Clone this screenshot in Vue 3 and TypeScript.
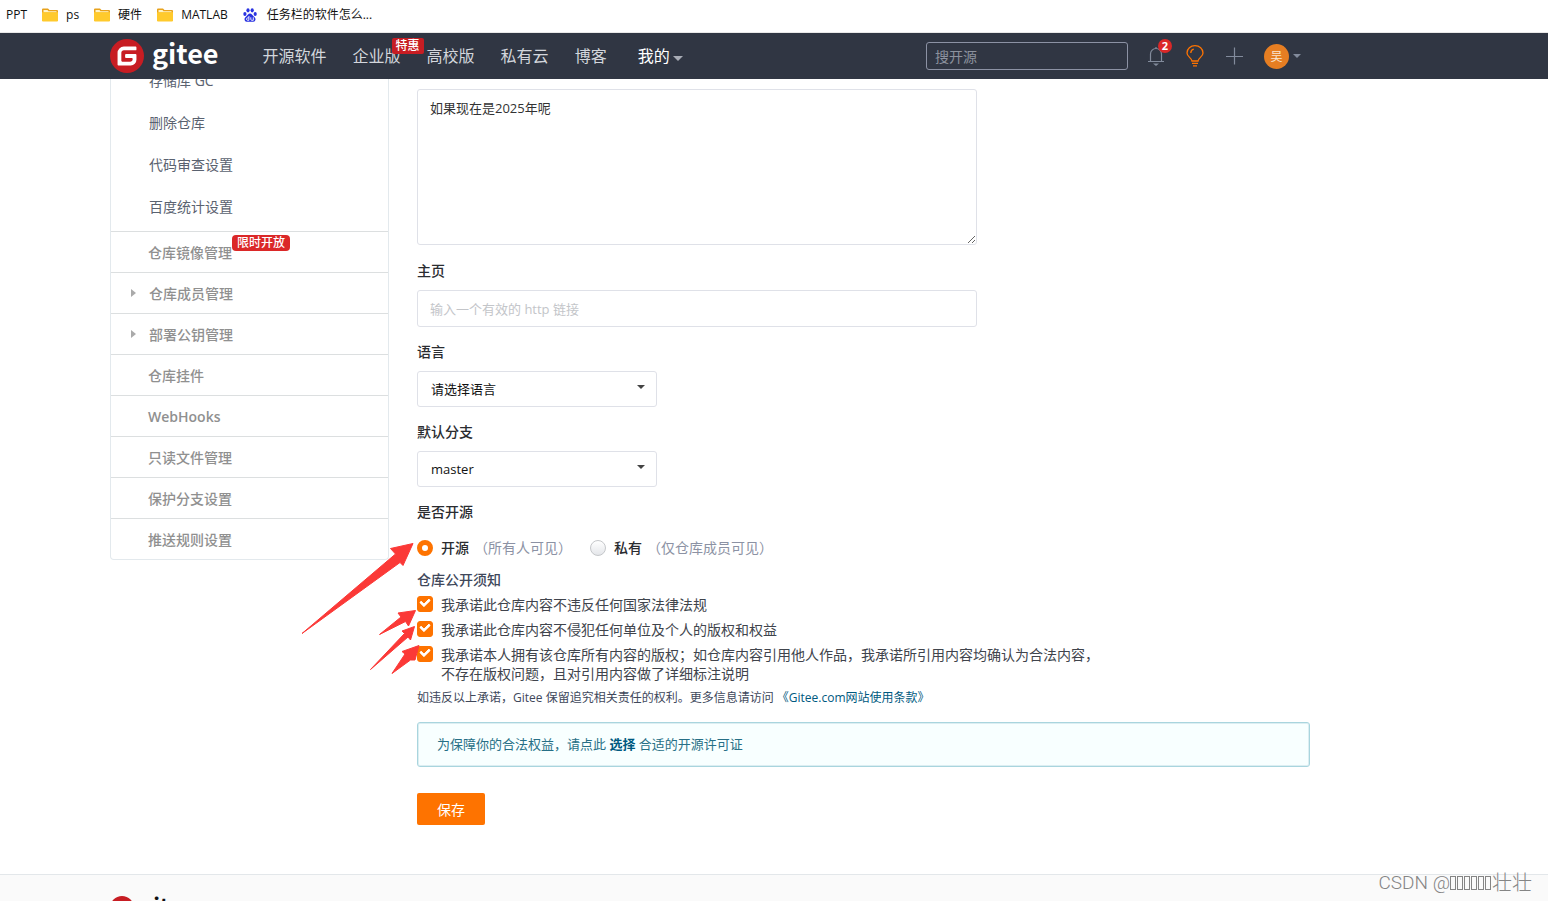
<script setup lang="ts">
import { ref } from 'vue'

interface SideEntry {
  label: string
  expandable?: boolean
  strong?: boolean
  tag?: string
}

const gPath =
  'M18.074 5.333c.328 0 .593.266.592.593v1.482a.594.594 0 0 1-.593.592H9.777c-.982 0-1.778.796-1.778 1.778v5.63c0 .327.266.592.593.592h5.63c.982 0 1.778-.796 1.778-1.778v-.296a.593.593 0 0 0-.592-.593h-4.15a.592.592 0 0 1-.592-.592v-1.482a.593.593 0 0 1 .593-.592h6.815c.327 0 .593.265.593.592v3.408a4 4 0 0 1-4 4H5.926a.593.593 0 0 1-.593-.593V9.778a4.444 4.444 0 0 1 4.445-4.444h8.296Z'

const folders = ['ps', '硬件', 'MATLAB']
const navLinks = [
  { label: '开源软件' },
  { label: '企业版', tag: '特惠' },
  { label: '高校版' },
  { label: '私有云' },
  { label: '博客' },
]
const subItems = ['存储库 GC', '删除仓库', '代码审查设置', '百度统计设置']
const sections: SideEntry[] = [
  { label: '仓库镜像管理', tag: '限时开放' },
  { label: '仓库成员管理', expandable: true },
  { label: '部署公钥管理', expandable: true },
  { label: '仓库挂件' },
  { label: 'WebHooks', strong: true },
  { label: '只读文件管理' },
  { label: '保护分支设置' },
  { label: '推送规则设置' },
]

const keyword = ref('')
const intro = ref('如果现在是2025年呢')
const homepage = ref('')
const language = ref('')
const branch = ref('master')
const visibility = ref('public')
const promises = ref([true, true, true])
</script>

<template>
  <div class="page">
    <nav class="bookmarks" aria-label="书签">
      <a href="#" class="bookmark">PPT</a>
      <a v-for="name in folders" :key="name" href="#" class="bookmark">
        <svg width="16" height="14" viewBox="0 0 16 14" aria-hidden="true">
          <path d="M0 1.500Q0 .5 1 .5h5l1.500 1.500H15q1 0 1 1V13H0z" fill="#e8a21c" />
          <path d="M1.500 2h4l1 1.200H14.500V4.500H1.500z" fill="#fff3c4" />
          <path d="M0 4.200h16V12.500q0 1-1 1H1q-1 0-1-1z" fill="#ffca2c" />
        </svg>
        <span>{{ name }}</span>
      </a>
      <a href="#" class="bookmark site">
        <svg width="14" height="14" viewBox="0 0 14 14" aria-hidden="true">
          <g fill="#2932e1">
            <ellipse cx="1.9" cy="6" rx="1.6" ry="2" />
            <ellipse cx="5" cy="2.3" rx="1.6" ry="2.1" />
            <ellipse cx="9.2" cy="2.3" rx="1.6" ry="2.1" />
            <ellipse cx="12.2" cy="6" rx="1.6" ry="2" />
            <path d="M7 5.5c1.800 0 2.300 1.500 3.500 2.700 1.400 1.200 2.300 2 1.900 3.800-.5 1.900-2.400 2-5.400 1.700-3 .3-4.900.2-5.400-1.700-.4-1.800.5-2.600 1.900-3.800C4.700 7 5.200 5.500 7 5.500z" />
          </g>
          <path d="M5.900 8v4.300H4.500q-1-.2-1-1.200t1-1.200h1.400M7.800 9.300v2q0 1 1 1h1.500v-3" fill="none" stroke="#fff" stroke-width=".9" />
        </svg>
        <span>任务栏的软件怎么...</span>
      </a>
    </nav>

    <header class="topbar">
      <div class="container topbar-inner">
        <a href="#" class="brand">
          <svg width="34" height="34" viewBox="0 0 24 24" aria-hidden="true">
            <circle cx="12" cy="12" r="12" fill="#c71d23" />
            <path :d="gPath" fill="#fff" />
          </svg>
          <span class="brand-name">gitee</span>
        </a>
        <nav class="links" aria-label="主导航">
          <a v-for="link in navLinks" :key="link.label" href="#">
            {{ link.label }}<span v-if="link.tag" class="promo">{{ link.tag }}</span>
          </a>
          <a href="#" class="mine">我的<span class="caret"></span></a>
        </nav>
        <div class="tools">
          <input v-model="keyword" class="search" type="search" placeholder="搜开源" aria-label="搜开源" />
          <button type="button" class="tool bell" aria-label="通知">
            <svg width="18" height="22" viewBox="0 0 18 22" fill="none" stroke="#828b9c" stroke-width="1.2" aria-hidden="true">
              <path d="M3.500 16.500V9a5.500 5.500 0 0 1 11 0v7.500M1 16.500h16M9 3.500V2" />
              <path d="M6 18.500h6L9 21z" fill="#828b9c" stroke="none" />
            </svg>
            <span class="count">2</span>
          </button>
          <button type="button" class="tool" aria-label="动态">
            <svg width="18" height="22" viewBox="0 0 18 22" fill="none" stroke="#fe7300" stroke-width="1.3" aria-hidden="true">
              <path d="M6 16c0-3-5-4-5-8a8 7.300 0 0 1 16 0C17 12 12 13 12 16z" />
              <path d="M4.800 8a4 4 0 0 1 3-3.800M6 18.300h6M7 20.800h4" />
            </svg>
          </button>
          <button type="button" class="tool" aria-label="新建">
            <svg width="18" height="18" viewBox="0 0 18 18" stroke="#828b9c" stroke-width="1.2" aria-hidden="true">
              <path d="M9.500 .5v17M1 9.500h17" />
            </svg>
          </button>
          <button type="button" class="tool account" aria-label="账户">
            <span class="avatar">吴</span><span class="caret dim"></span>
          </button>
        </div>
      </div>
    </header>

    <div class="container body">
      <aside class="sidebar">
        <ul class="sub">
          <li v-for="item in subItems" :key="item"><a href="#">{{ item }}</a></li>
        </ul>
        <ul class="sections">
          <li v-for="s in sections" :key="s.label">
            <a href="#" :class="{ expandable: s.expandable, strong: s.strong }">
              <span v-if="s.expandable" class="chevron"></span>{{ s.label }}<span v-if="s.tag" class="limited">{{ s.tag }}</span>
            </a>
          </li>
        </ul>
      </aside>

      <form class="form" @submit.prevent>
        <textarea v-model="intro" class="box intro" aria-label="仓库介绍"></textarea>

        <label class="title" for="homepage">主页</label>
        <input id="homepage" v-model="homepage" class="box homepage" type="text" placeholder="输入一个有效的 http 链接" />

        <label class="title" for="language">语言</label>
        <div class="select">
          <select id="language" v-model="language" class="box">
            <option value="">请选择语言</option>
          </select>
          <span class="arrow"></span>
        </div>

        <label class="title" for="branch">默认分支</label>
        <div class="select">
          <select id="branch" v-model="branch" class="box">
            <option value="master">master</option>
          </select>
          <span class="arrow"></span>
        </div>

        <div id="visibility" class="title">是否开源</div>
        <div class="radios" role="radiogroup" aria-labelledby="visibility">
          <label><input v-model="visibility" type="radio" name="visibility" value="public" /><b>开源</b><span>（所有人可见）</span></label>
          <label><input v-model="visibility" type="radio" name="visibility" value="private" /><b>私有</b><span>（仅仓库成员可见）</span></label>
        </div>

        <div class="notice-title">仓库公开须知</div>
        <div class="promises">
          <label><input v-model="promises[0]" type="checkbox" /><span>我承诺此仓库内容不违反任何国家法律法规</span></label>
          <label><input v-model="promises[1]" type="checkbox" /><span>我承诺此仓库内容不侵犯任何单位及个人的版权和权益</span></label>
          <label><input v-model="promises[2]" type="checkbox" /><span>我承诺本人拥有该仓库所有内容的版权；如仓库内容引用他人作品，我承诺所引用内容均确认为合法内容，<br />不存在版权问题，且对引用内容做了详细标注说明</span></label>
        </div>
        <p class="terms">如违反以上承诺，Gitee 保留追究相关责任的权利。更多信息请访问 <a href="#">《Gitee.com网站使用条款》</a></p>

        <div class="message">为保障你的合法权益，请点此 <a href="#">选择</a> 合适的开源许可证</div>
        <button type="submit" class="save">保存</button>
      </form>

      <svg class="marks" width="130" height="140" viewBox="295 538 130 140" fill="#fb3937" stroke="#fb3937" stroke-width="1" stroke-linejoin="round" aria-hidden="true">
        <path d="M413 543.500 390.500 548.500 395.500 554 302 633.500 400 562.500 403 565.500z" />
        <path d="M415.500 610.500 398 613 401 617 379.500 634.500 405.500 621.500 408.500 626z" />
        <path d="M414.500 626.500 402 631 404.500 633.500 370.500 669.500 408 637 410.500 640z" />
        <path d="M419 645.500 402 651.500 405 654 392 673.500 410.500 660 415 660z" />
      </svg>
    </div>

    <footer class="footer">
      <div class="container">
        <a href="#" class="brand small">
          <svg width="24" height="24" viewBox="0 0 24 24" aria-hidden="true">
            <circle cx="12" cy="12" r="12" fill="#c71d23" />
            <path :d="gPath" fill="#fff" />
          </svg>
          <span class="brand-name">gitee</span>
        </a>
      </div>
    </footer>
    <div class="watermark"><span class="handle">CSDN @</span><i v-for="n in 6" :key="n"></i>壮壮</div>
  </div>
</template>

<style>
body {
  margin: 0;
}
</style>

<style scoped>
* {
  box-sizing: border-box;
}
.page {
  position: relative;
  display: flex;
  flex-direction: column;
  height: 100vh;
  overflow: hidden;
  background: #fff;
  color: #40485b;
  font-family: "Open Sans", "Noto Sans CJK SC", sans-serif;
  font-size: 14px;
}
a {
  color: inherit;
  text-decoration: none;
}
ul {
  margin: 0;
  padding: 0;
  list-style: none;
}
input,
select,
textarea,
button {
  font: inherit;
  margin: 0;
}
button {
  border: 0;
  padding: 0;
  background: none;
  cursor: pointer;
}
.container {
  max-width: 1310px;
  padding-left: 110px;
}

.bookmarks {
  display: flex;
  flex: none;
  align-items: center;
  gap: 15px;
  height: 33px;
  padding: 0 6px 2px;
  border-bottom: 1px solid #e8e8e8;
  color: #111;
  font-size: 12px;
  line-height: 20px;
}
.bookmark {
  display: flex;
  align-items: center;
  gap: 8px;
}
.bookmark.site {
  gap: 10px;
}

.topbar {
  position: relative;
  z-index: 2;
  flex: none;
  background: #303643;
}
.topbar-inner {
  display: flex;
  align-items: center;
  height: 46px;
}
.brand {
  display: flex;
  align-items: center;
  gap: 8px;
  color: #fff;
}
.brand-name {
  font-family: "Noto Sans CJK SC", sans-serif;
  font-size: 27px;
  font-weight: 700;
  line-height: 32px;
  padding-bottom: 6px;
}
.links {
  display: flex;
  gap: 26px;
  margin-left: 44px;
  color: #d3d6dc;
  font-size: 16px;
  line-height: 24px;
}
.links a {
  position: relative;
}
.links .mine {
  display: flex;
  align-items: center;
  gap: 3px;
  margin-left: 5px;
  color: #fff;
}
.promo {
  position: absolute;
  top: -6px;
  left: 39px;
  width: 32px;
  border-radius: 2px;
  background: #c71d23;
  color: #fff;
  font-size: 12px;
  font-weight: 500;
  line-height: 16px;
  text-align: center;
}
.caret {
  border: 5px solid transparent;
  border-top-color: #a8acb5;
  border-bottom: 0;
  margin-top: 4px;
}
.caret.dim {
  border-width: 4px 4px 0;
  border-top-color: #828b9c;
  margin-top: 0;
}
.tools {
  display: flex;
  align-items: center;
  gap: 21px;
  margin-left: auto;
  padding-right: 9px;
}
.search {
  width: 202px;
  height: 28px;
  padding: 0 8px;
  border: 1px solid #8c92a4;
  border-radius: 3px;
  outline: 0;
  background: transparent;
  color: #fff;
  font-size: 14px;
  margin-right: -2px;
}
.search::placeholder {
  color: #8c929e;
}
.tool {
  position: relative;
  display: flex;
  align-items: center;
}
.count {
  position: absolute;
  top: -6px;
  left: 11px;
  width: 14px;
  height: 14px;
  border-radius: 7px;
  background: #db2828;
  color: #fff;
  font-size: 11px;
  font-weight: 700;
  line-height: 14px;
  text-align: center;
}
.account {
  gap: 4px;
}
.avatar {
  width: 25px;
  height: 25px;
  border-radius: 50%;
  background: #e67e22;
  color: #f8e5d3;
  font-size: 12px;
  line-height: 25px;
  text-align: center;
}

.body {
  position: relative;
  display: flex;
  flex: none;
  align-items: flex-start;
  gap: 28px;
}
.sidebar {
  flex: none;
  width: 279px;
  margin-top: -19px;
  border: 1px solid #e3e9ed;
  border-top: 0;
  border-radius: 0 0 4px 4px;
}
.sub {
  padding-bottom: 3px;
  color: #5a6270;
}
.sub a {
  display: block;
  padding-left: 38px;
  line-height: 42px;
}
.sections li {
  border-top: 1px solid #dcdfe0;
}
.sections a {
  position: relative;
  display: block;
  padding: 2px 0 0 37px;
  color: #909090;
  font-weight: 500;
  line-height: 38px;
}
.sections a.expandable {
  padding-left: 38px;
}
.sections a.strong {
  font-weight: 600;
}
.chevron {
  position: absolute;
  top: 16px;
  left: 20px;
  border: 4px solid transparent;
  border-left: 5px solid #aaa;
  border-right: 0;
}
.limited {
  position: absolute;
  top: 3px;
  left: 121px;
  padding: 0 5px;
  border-radius: 4px;
  background: #db2828;
  color: #fff;
  font-size: 12px;
  font-weight: 500;
  line-height: 16px;
}

.form {
  flex: 1;
  display: flex;
  flex-direction: column;
  align-items: flex-start;
  min-width: 0;
  padding: 10px 0 49px;
}
.box {
  width: 100%;
  max-width: 560px;
  border: 1px solid #dfe1e8;
  border-radius: 3px;
  outline: 0;
  background: #fff;
  color: #333;
  font-size: 13px;
}
.intro {
  height: 156px;
  margin-bottom: 1px;
  padding: 9px 12px;
  line-height: 18px;
  resize: vertical;
}
.homepage {
  height: 37px;
  padding: 0 12px;
}
.homepage::placeholder {
  color: #c3c5c9;
}
.title {
  margin: 15px 0 9px;
  color: #2a2c30;
  font-weight: 500;
  line-height: 20px;
}
.select {
  position: relative;
  width: 240px;
}
.select .box {
  display: block;
  height: 36px;
  padding: 0 13px;
  appearance: none;
  color: #111;
}
.arrow {
  position: absolute;
  top: 14px;
  right: 12px;
  border: 4px solid transparent;
  border-top-color: #444;
  border-bottom: 0;
  pointer-events: none;
}
.radios {
  display: flex;
  gap: 18px;
  margin-top: 7px;
  line-height: 20px;
}
.radios label {
  display: flex;
  align-items: center;
}
.radios b {
  margin-left: 8px;
  color: #2a2c30;
  font-weight: 500;
}
.radios span {
  margin-left: 5px;
  color: #8c92a4;
}
.radios input {
  width: 16px;
  height: 16px;
  border: 1px solid #c5c7ca;
  border-radius: 50%;
  appearance: none;
  background: linear-gradient(#fff, #e4e6ea);
}
.radios input:checked {
  border: 5px solid #fe7300;
  background: #fff;
}
.notice-title {
  margin-top: 12px;
  font-weight: 500;
  line-height: 20px;
}
.promises {
  display: flex;
  flex-direction: column;
  gap: 6px;
  margin-top: 5px;
  color: #40444c;
  line-height: 19px;
}
.promises label {
  display: flex;
  gap: 8px;
}
.promises input {
  position: relative;
  flex: none;
  width: 16px;
  height: 16px;
  margin-top: 1px;
  border: 1px solid #fe7300;
  border-radius: 3px;
  appearance: none;
}
.promises input:checked {
  background: #fe7300;
}
.promises input:checked::before {
  content: "";
  position: absolute;
  top: 1px;
  left: 2px;
  box-sizing: border-box;
  width: 10px;
  height: 7px;
  border: solid #fff;
  border-width: 0 0 3px 3px;
  border-radius: 1px;
  transform: rotate(-45deg);
}
.terms {
  margin: 5px 0 0;
  font-size: 12px;
  line-height: 20px;
}
.terms a {
  color: #005980;
}
.message {
  width: 100%;
  margin-top: 14px;
  padding: 12px 19px;
  border: 1px solid #a9d5de;
  border-radius: 3px;
  box-shadow: 0 0 0 1px #dceef2 inset;
  background: #f8ffff;
  color: #276f86;
  font-size: 13px;
  line-height: 19px;
}
.message a {
  color: #005980;
  font-weight: 700;
}
.save {
  width: 68px;
  height: 32px;
  margin-top: 26px;
  border-radius: 2px;
  background: #fe7300;
  color: #fff;
}
/* Hand-drawn arrows pointing at the options */
.marks {
  position: absolute;
  top: 459px;
  left: 295px;
  pointer-events: none;
}

.footer {
  flex: 1 0 0;
  min-height: 0;
  overflow: hidden;
  border-top: 1px solid #e3e7ea;
  background: #fafafa;
}
.small {
  gap: 6px;
  padding-top: 14px;
  color: #111;
}
.small .brand-name {
  font-size: 22px;
}
.watermark {
  position: absolute;
  right: 16px;
  bottom: 5px;
  display: flex;
  align-items: center;
  color: #858585;
  font-family: Roboto, "Noto Sans CJK SC", sans-serif;
  font-size: 20px;
  font-weight: 300;
  line-height: 26px;
}
.handle {
  font-size: 19px;
}
.watermark i {
  width: 6px;
  height: 14px;
  margin-right: 1px;
  border: 1px solid #858585;
}
</style>
